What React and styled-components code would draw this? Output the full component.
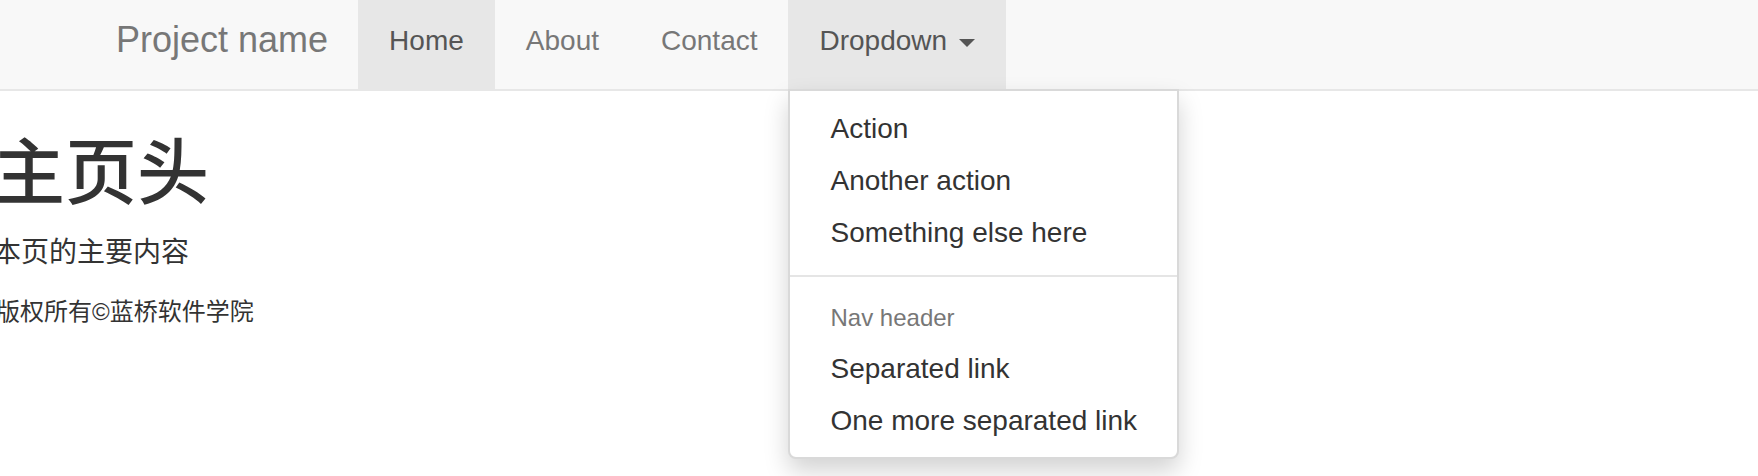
import React from "react";
import styled, { createGlobalStyle } from "styled-components";

const GlobalStyle = createGlobalStyle`
  *, *::before, *::after { box-sizing: border-box; }
  html, body { margin: 0; padding: 0; background: #fff; }
  body {
    font-family: "Liberation Sans", "Noto Sans CJK SC", sans-serif;
    color: #333;
  }
`;

const Page = styled.div`
  min-height: 476px;
  overflow: hidden;
`;

const Navbar = styled.nav`
  background: #f8f8f8;
  border-bottom: 2px solid #e7e7e7;
`;

const NavContainer = styled.div`
  display: flex;
  align-items: stretch;
  padding-left: 86px;
  height: 89px;
`;

const Brand = styled.a`
  display: block;
  font-size: 36px;
  line-height: 40px;
  padding: 20px 30px 29px;
  color: #777;
  text-decoration: none;
  white-space: nowrap;
`;

const NavList = styled.ul`
  display: flex;
  list-style: none;
  margin: 0;
  padding: 0;
`;

const NavItem = styled.li`
  position: relative;
`;

const NavLink = styled.a`
  display: block;
  font-size: 28px;
  line-height: 40px;
  padding: 21px 31px 28px;
  color: ${(p) => (p.$active ? "#555" : "#777")};
  background: ${(p) => (p.$active ? "#e7e7e7" : "transparent")};
  text-decoration: none;
  white-space: nowrap;
`;

const Caret = styled.span`
  display: inline-block;
  width: 0;
  height: 0;
  margin-left: 4px;
  vertical-align: middle;
  border-top: 8px solid currentColor;
  border-left: 8px solid transparent;
  border-right: 8px solid transparent;
`;

const Menu = styled.ul`
  position: absolute;
  top: 100%;
  left: 0;
  z-index: 10;
  margin: 0;
  padding: 10px 0 12px;
  list-style: none;
  background: #fff;
  border: 2px solid rgba(0, 0, 0, 0.15);
  border-radius: 0 0 8px 8px;
  box-shadow: 0 12px 24px rgba(0, 0, 0, 0.175);
  min-width: 320px;
`;

const MenuLink = styled.a`
  display: block;
  padding: 8px 40px 4px;
  font-size: 28px;
  line-height: 40px;
  color: #333;
  text-decoration: none;
  white-space: nowrap;
`;

const MenuHeader = styled.li`
  padding: 6px 40px;
  font-size: 24px;
  line-height: 34px;
  color: #777;
  white-space: nowrap;
`;

const MenuDivider = styled.li`
  height: 2px;
  margin: 18px 0;
  background: #e5e5e5;
`;

const Main = styled.main`
  margin-left: -7px;
`;

const Heading = styled.h1`
  margin: 43px 0 20px;
  font-size: 72px;
  line-height: 1.1;
  font-weight: 500;
  color: #333;
`;

const Lead = styled.p`
  margin: 0 0 22px;
  font-size: 28px;
  line-height: 40px;
`;

const Footer = styled.footer`
  font-size: 24px;
  line-height: 34px;
  margin-left: 3px;
`;

const navItems = [
  { label: "Home", active: true },
  { label: "About" },
  { label: "Contact" },
];

const menuItems = [
  { type: "link", label: "Action" },
  { type: "link", label: "Another action" },
  { type: "link", label: "Something else here" },
  { type: "divider" },
  { type: "header", label: "Nav header" },
  { type: "link", label: "Separated link" },
  { type: "link", label: "One more separated link" },
];

export default function App() {
  return (
    <Page>
      <GlobalStyle />
      <Navbar>
        <NavContainer>
          <Brand href="#">Project name</Brand>
          <NavList>
            {navItems.map((item) => (
              <NavItem key={item.label}>
                <NavLink href="#" $active={item.active}>
                  {item.label}
                </NavLink>
              </NavItem>
            ))}
            <NavItem>
              <NavLink href="#" $active>
                Dropdown <Caret />
              </NavLink>
              <Menu>
                {menuItems.map((m, i) => {
                  if (m.type === "divider") return <MenuDivider key={i} />;
                  if (m.type === "header")
                    return <MenuHeader key={i}>{m.label}</MenuHeader>;
                  return (
                    <li key={i}>
                      <MenuLink href="#">{m.label}</MenuLink>
                    </li>
                  );
                })}
              </Menu>
            </NavItem>
          </NavList>
        </NavContainer>
      </Navbar>
      <Main>
        <Heading>主页头</Heading>
        <Lead>本页的主要内容</Lead>
        <Footer>版权所有©蓝桥软件学院</Footer>
      </Main>
    </Page>
  );
}
